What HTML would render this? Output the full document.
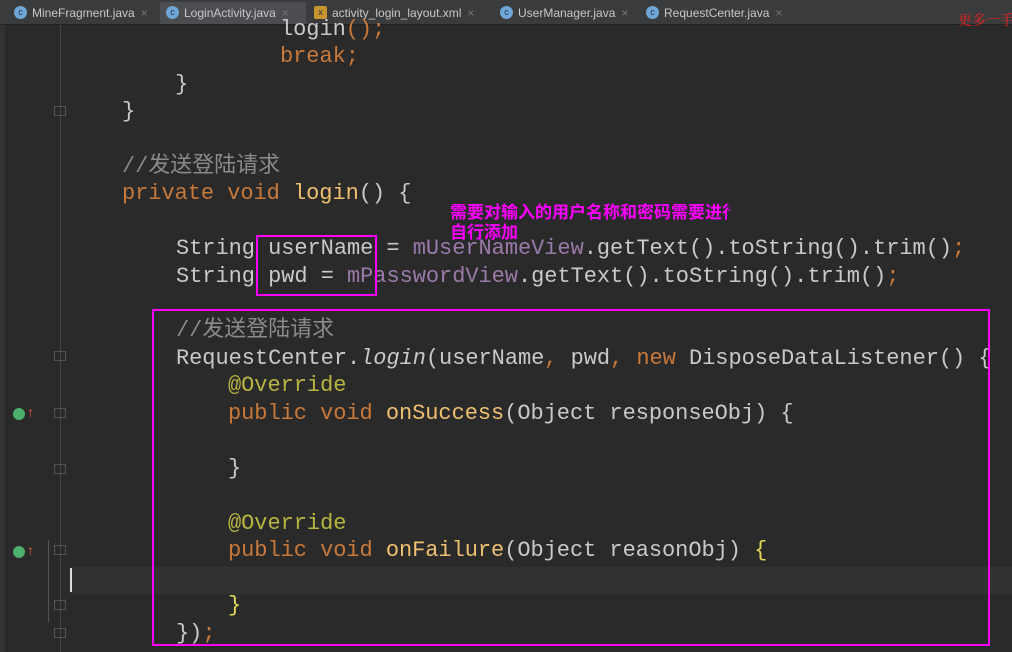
<!DOCTYPE html><html><head><meta charset="utf-8"><style>
body{margin:0;width:1012px;height:652px;overflow:hidden;background:#2a2a2b;position:relative;font-family:"Liberation Mono","Noto Sans CJK SC",monospace}
.tabs{position:absolute;left:0;top:0;width:1012px;height:24px;background:#3a3b3d;border-bottom:1px solid #222}
.tab{position:absolute;top:2px;height:22px;font:12px "Liberation Sans",sans-serif;color:#c8c8c8;line-height:22px;padding-left:24px;box-sizing:border-box}
.tab i{position:absolute;left:6px;top:4px;width:13px;height:13px;border-radius:50%;background:#6fa7d8;font-style:normal;font-size:9px;line-height:13px;text-align:center;color:#234}
.tab b{font-weight:normal;color:#777;margin-left:6px}
.act{background:#4b4d50}
.l{position:absolute;font-size:22px;line-height:28px;color:#c9c9c9;white-space:pre;letter-spacing:-0.05px}
.k{color:#c8793a}.c{color:#8a8a8a}.a{color:#b8b440}.m{color:#f0c070}.p{color:#9a7aa8}.y{color:#e8d85a}
.box{position:absolute;border:2px solid #f0f;box-sizing:border-box}
.fold{position:absolute;left:54px;width:12px;height:10px;border:1px solid #555;box-sizing:border-box}
</style></head><body>
<div class="tabs">
<div class="tab" style="left:8px;width:150px"><i>c</i>MineFragment.java<b>×</b></div>
<div class="tab act" style="left:160px;width:146px"><i>c</i>LoginActivity.java<b>×</b></div>
<div class="tab" style="left:308px;width:184px"><i style="background:#c9952f;border-radius:2px">x</i>activity_login_layout.xml<b>×</b></div>
<div class="tab" style="left:494px;width:142px"><i>c</i>UserManager.java<b>×</b></div>
<div class="tab" style="left:640px;width:150px"><i>c</i>RequestCenter.java<b>×</b></div>
<div style="position:absolute;left:958px;top:10px;width:54px;overflow:hidden;white-space:nowrap;font:14px 'Noto Serif CJK SC',serif;color:#e22">更多一手</div>
</div>
<div style="position:absolute;left:0;top:25px;width:5px;height:627px;background:#333"></div>
<div style="position:absolute;left:60px;top:25px;width:1px;height:627px;background:#444"></div>
<div style="position:absolute;left:70px;top:567px;width:942px;height:27px;background:#323233"></div>
<div style="position:absolute;left:70px;top:568px;width:2px;height:24px;background:#ddd"></div>
<div style="position:absolute;left:48px;top:540px;width:1px;height:82px;background:#555"></div>
<div class="fold" style="top:106px"></div><div class="fold" style="top:351px"></div><div class="fold" style="top:408px"></div><div class="fold" style="top:464px"></div><div class="fold" style="top:545px"></div><div class="fold" style="top:600px"></div><div class="fold" style="top:628px"></div>
<div style="position:absolute;left:13px;top:408px;width:12px;height:12px;border-radius:50%;background:#4caf6a"></div><div style="position:absolute;left:27px;top:404px;color:#e05a3a;font:bold 14px sans-serif">↑</div>
<div style="position:absolute;left:13px;top:546px;width:12px;height:12px;border-radius:50%;background:#4caf6a"></div><div style="position:absolute;left:27px;top:542px;color:#e05a3a;font:bold 14px sans-serif">↑</div>

<div class="l" style="left:280px;top:16px">login<span class="k">();</span></div>
<div class="l k" style="left:280px;top:43px">break;</div>
<div class="l" style="left:175px;top:71px">}</div>
<div class="l" style="left:122px;top:98px">}</div>
<div class="l c" style="left:122px;top:153px">//发送登陆请求</div>
<div class="l" style="left:122px;top:180px"><span class="k">private void </span><span class="m">login</span>() {</div>
<div class="l" style="left:176px;top:235px">String userName = <span class="p">mUserNameView</span>.getText().toString().trim()<span class="k">;</span></div>
<div class="l" style="left:176px;top:263px">String pwd = <span class="p">mPasswordView</span>.getText().toString().trim()<span class="k">;</span></div>
<div class="l c" style="left:176px;top:317px">//发送登陆请求</div>
<div class="l" style="left:176px;top:345px">RequestCenter.<i>login</i>(userName<span class="k">, </span>pwd<span class="k">, new </span>DisposeDataListener() {</div>
<div class="l a" style="left:228px;top:372px">@Override</div>
<div class="l" style="left:228px;top:400px"><span class="k">public void </span><span class="m">onSuccess</span>(Object responseObj) {</div>
<div class="l" style="left:228px;top:455px">}</div>
<div class="l a" style="left:228px;top:510px">@Override</div>
<div class="l" style="left:228px;top:537px"><span class="k">public void </span><span class="m">onFailure</span>(Object reasonObj) <span class="y">{</span></div>
<div class="l y" style="left:228px;top:592px">}</div>
<div class="l" style="left:176px;top:620px">})<span class="k">;</span></div>

<div class="box" style="left:256px;top:235px;width:121px;height:61px"></div>
<div class="box" style="left:152px;top:309px;width:838px;height:337px"></div>
<div style="position:absolute;left:450px;top:201px;width:280px;overflow:hidden;white-space:nowrap;font:bold 17px/20px 'Noto Sans CJK SC',sans-serif;color:#f0f">需要对输入的用户名称和密码需要进行<br>自行添加</div>
</body></html>
